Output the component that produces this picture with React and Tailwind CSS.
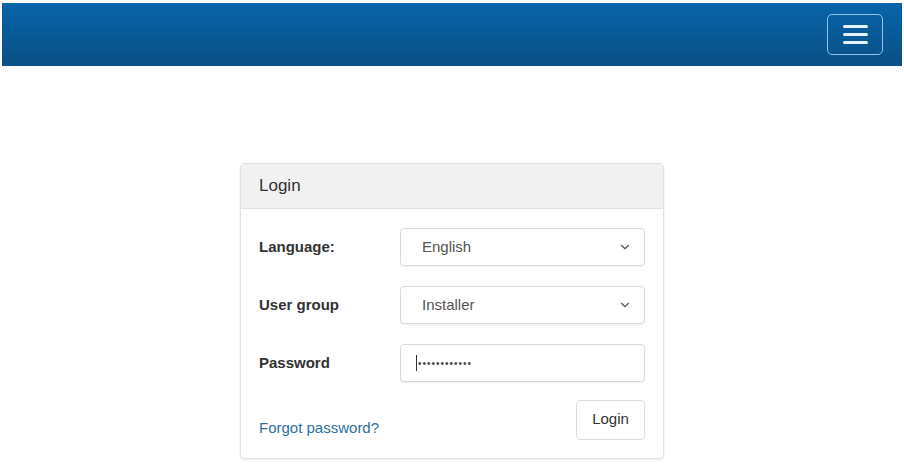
import React, { useState } from "react";
import { ChevronDown } from "lucide-react";

const font = { fontFamily: '"Liberation Sans", Arial, sans-serif' };

const SelectBox = ({ value }) => {
  return (
    <div className="flex h-[38px] w-[245px] items-center justify-between rounded-[4px] border border-[#d9d9d9] bg-white pl-[21px] pr-[12px] text-[15px] text-[#555] shadow-[0_1px_2px_rgba(0,0,0,0.06)]">
      <span>{value}</span>
      <ChevronDown size={14} strokeWidth={2} className="text-[#555]" />
    </div>
  );
};

const App = () => {
  const [menuOpen, setmenuOpen] = useState(false);

  return (
    <div className="min-h-screen bg-white px-[2px] pt-[3px]" style={font}>
      {/* top bar */}
      <div className="flex h-[63px] items-center justify-end bg-gradient-to-b from-[#0765aa] to-[#094f85] pr-[19px]">
        <button
          onClick={() => setmenuOpen(!menuOpen)}
          className="flex h-[41px] w-[56px] flex-col items-center justify-center gap-[5px] rounded-[5px] border border-[#8fc3ea]"
        >
          <span className="block h-[3px] w-[25px] rounded-sm bg-[#e6f2fb]" />
          <span className="block h-[3px] w-[25px] rounded-sm bg-[#e6f2fb]" />
          <span className="block h-[3px] w-[25px] rounded-sm bg-[#e6f2fb]" />
        </button>
      </div>

      <div className="flex justify-center pt-[97px]">
        <div className="w-[424px] rounded-[4px] border border-[#e0e0e0] bg-white shadow-[0_1px_3px_rgba(0,0,0,0.08)]">
          <div className="flex h-[45px] items-center border-b border-[#e2e2e2] bg-[#f1f1f1] px-[18px] text-[17px] text-[#333]">
            Login
          </div>
          <div className="flex flex-col gap-[20px] px-[18px] pb-[18px] pt-[19px]">
            <div className="flex items-center justify-between">
              <span className="text-[15px] font-bold text-[#333]">Language:</span>
              <SelectBox value="English" />
            </div>
            <div className="flex items-center justify-between">
              <span className="text-[15px] font-bold text-[#333]">User group</span>
              <SelectBox value="Installer" />
            </div>
            <div className="flex items-center justify-between">
              <span className="text-[15px] font-bold text-[#333]">Password</span>
              <div className="flex h-[38px] w-[245px] items-center rounded-[4px] border border-[#d9d9d9] bg-white pl-[15px] shadow-[0_1px_2px_rgba(0,0,0,0.06)]">
                <span className="mr-[1px] block h-[16px] w-px bg-[#333]" />
                <span className="text-[10px] tracking-[1px] text-[#444]">••••••••••••</span>
              </div>
            </div>
            <div className="-mt-[2px] flex items-end justify-between">
              <a href="#" className="pb-[1px] text-[15px] text-[#2f6f9e]">
                Forgot password?
              </a>
              <button className="h-[40px] w-[69px] rounded-[4px] border border-[#dcdcdc] bg-white pb-[2px] text-[15px] text-[#333]">
                Login
              </button>
            </div>
          </div>
        </div>
      </div>
    </div>
  );
};

export default App;
